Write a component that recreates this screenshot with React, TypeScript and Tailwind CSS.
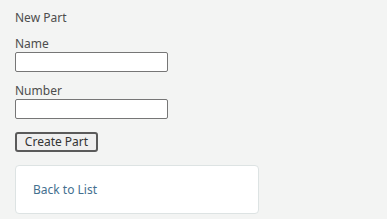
export default function App() {
  return (
    <div className="min-h-[219px] bg-[#f3f4f3] px-[15px] pt-[9px] font-['Noto_Sans',sans-serif] text-[12px] text-[#4d4d4d]">
      <h1 className="h-[17px] leading-[17px] text-[12px] font-normal">New Part</h1>

      <form className="mt-[9px] flex flex-col" onSubmit={(e) => e.preventDefault()}>
        <label className="block h-[17px] leading-[17px]" htmlFor="name">
          Name
        </label>
        <input
          id="name"
          className="h-[20px] w-[153px] rounded-[2px] border border-[#767676] bg-white"
        />

        <label className="mt-[10px] block h-[17px] leading-[17px]" htmlFor="number">
          Number
        </label>
        <input
          id="number"
          className="h-[20px] w-[153px] rounded-[2px] border border-[#767676] bg-white"
        />

        <div className="mt-[13px]">
          <button
            type="submit"
            className="h-[20px] w-[83px] rounded-[3px] border-2 border-[#5a5a5a] bg-[#efefef] text-[12px] leading-[16px] text-[#333]"
          >
            Create Part
          </button>
        </div>
      </form>

      <div className="mt-[13px] flex h-[49px] w-[244px] items-center rounded-[4px] border border-[#dde3e3] bg-white px-[17px]">
        <a href="#" className="text-[12px] text-[#44708f]">
          Back to List
        </a>
      </div>
    </div>
  );
}
